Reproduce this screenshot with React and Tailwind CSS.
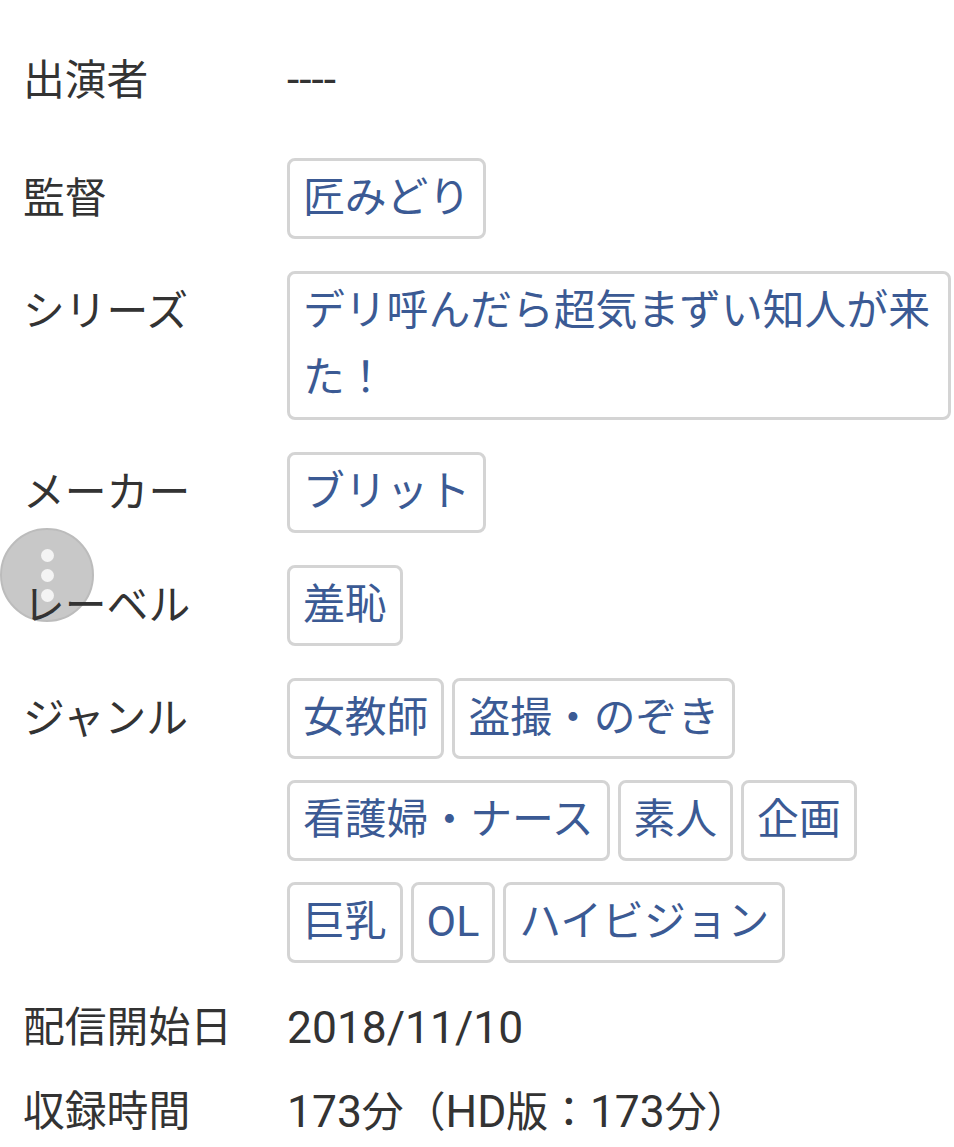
const font = { fontFamily: '"Roboto", "Noto Sans CJK JP", sans-serif' };

const Tag = ({ children }) => (
  <a className="inline-block h-[81px] rounded-[8px] border-[3px] border-[#d4d4d4] px-[13px] leading-[73px] text-[#3b5a94] whitespace-nowrap">
    {children}
  </a>
);

const Latin = ({ children }) => <span className="text-[44.4px]">{children}</span>;

const Row = ({ label, children, className = "", labelClass = "pt-[3px]" }) => (
  <div className={`flex ${className}`}>
    <div className={`w-[287px] shrink-0 pl-[23px] text-[#333] ${labelClass}`}>{label}</div>
    <div className="min-w-0 flex-1 text-[#333]">{children}</div>
  </div>
);

const genres = [
  ["女教師", "盗撮・のぞき"],
  ["看護婦・ナース", "素人", "企画"],
  ["巨乳", <span key="ol" className="text-[43px]">OL</span>, "ハイビジョン"],
];

export default function App() {
  return (
    <div className="relative h-[1147px] w-[954px] overflow-hidden bg-white text-[41.8px] leading-[76px]" style={font}>
      {/* floating menu button sits under the text in the reference */}
      <div className="absolute left-0 top-[528px] flex h-[94px] w-[94px] flex-col items-center justify-center gap-[7px] rounded-full border-2 border-[#bcbcbc] bg-[#c8c8c8]">
        <span className="h-[13px] w-[13px] rounded-full bg-[#f4f4f4]" />
        <span className="h-[13px] w-[13px] rounded-full bg-[#f4f4f4]" />
        <span className="h-[13px] w-[13px] rounded-full bg-[#f4f4f4]" />
      </div>
      <div className="relative flex flex-col pt-[42px]">
        <Row label="出演者" labelClass="pt-[1px]" className="h-[116px]"><Latin>----</Latin></Row>
        <Row label="監督" className="h-[113px]"><Tag>匠みどり</Tag></Row>
        <Row label="シリーズ" className="h-[181px]">
          <a className="mr-[3px] block h-[149px] rounded-[8px] border-[3px] border-[#d4d4d4] px-[13px] pt-[3px] leading-[67px] text-[#3b5a94]">
            デリ呼んだら超気まずい知人が来た！
          </a>
        </Row>
        <Row label="メーカー" className="h-[113px]"><Tag>ブリット</Tag></Row>
        <Row label="レーベル" className="h-[113px]"><Tag>羞恥</Tag></Row>
        <Row label="ジャンル" className="h-[312px]">
          <div className="flex flex-col gap-[21px]">
            {genres.map((line, i) => (
              <div key={i} className="flex gap-2">
                {line.map((g, j) => <Tag key={j}>{g}</Tag>)}
              </div>
            ))}
          </div>
        </Row>
        <Row label="配信開始日" labelClass="" className="h-[84px]"><Latin>2018/11/10</Latin></Row>
        <Row label="収録時間" labelClass="" className="h-[83px]">
          <Latin>173</Latin>分（<Latin>HD</Latin>版：<Latin>173</Latin>分）
        </Row>
      </div>
    </div>
  );
}
